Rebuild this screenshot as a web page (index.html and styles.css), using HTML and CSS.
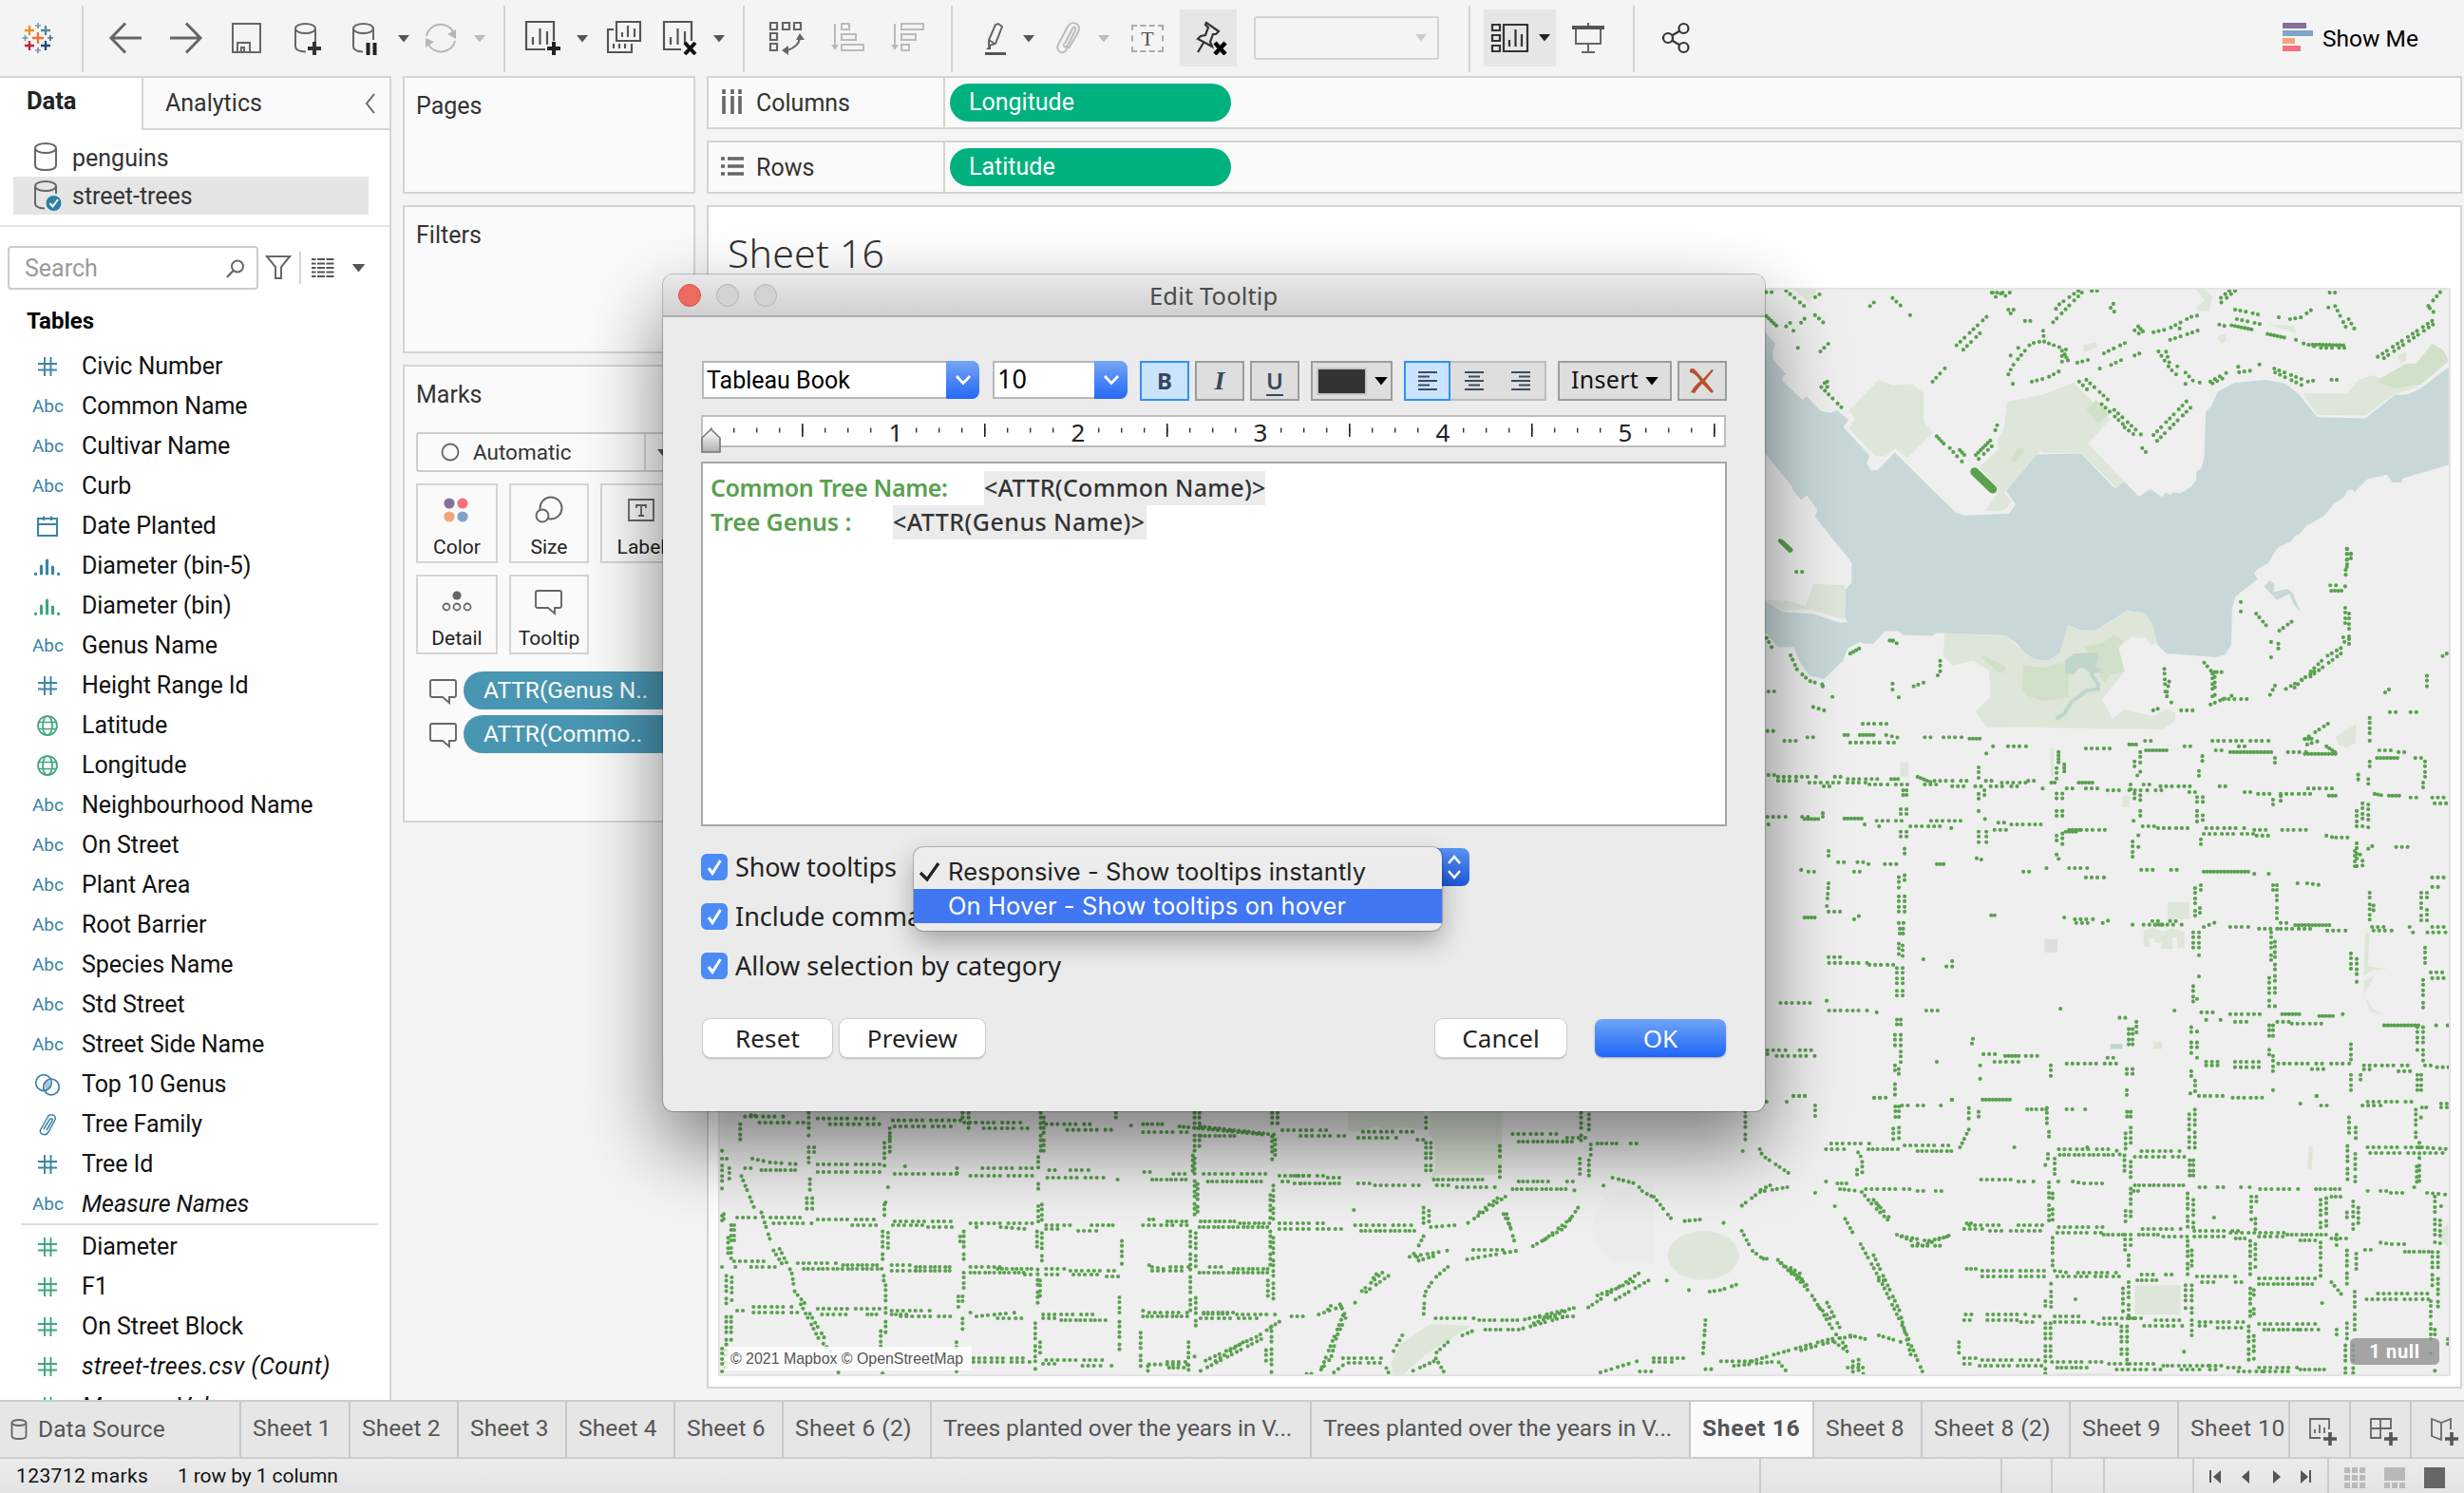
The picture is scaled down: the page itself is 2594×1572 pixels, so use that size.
FILE: index.html
```html
<!DOCTYPE html>
<html lang="en">
<head>
<meta charset="utf-8">
<title>Sheet 16 - Edit Tooltip</title>
<link rel="stylesheet" href="styles.css">
</head>
<body>
<svg class="defs" width="0" height="0">
  <symbol id="num" viewBox="0 0 32 24"><path d="M6 9H26M6 15.500H26M13 2V22M19.500 2V22" fill="none" stroke="currentColor" stroke-width="1.900"/></symbol>
  <symbol id="date" viewBox="0 0 32 24"><path d="M6 4H26V22H6ZM6 10H26M12 1.500V6M20 1.500V6" fill="none" stroke="currentColor" stroke-width="2"/></symbol>
  <symbol id="bin" viewBox="0 0 32 24"><path d="M3.500 20V20.500M9.500 12V20M15.500 6V20M21.500 13V20M27.500 20V20.500" fill="none" stroke="currentColor" stroke-width="3.200" stroke-linecap="round"/></symbol>
  <symbol id="geo" viewBox="0 0 32 24"><g fill="none" stroke="currentColor" stroke-width="1.700"><circle cx="16" cy="12" r="10"/><ellipse cx="16" cy="12" rx="5" ry="10"/><path d="M6.500 8.500H25.500M6.500 15.500H25.500"/></g></symbol>
  <symbol id="set" viewBox="0 0 32 24"><path d="M16.500 5.200A8.300 8.300 0 0 1 15.500 19.300A8.300 8.300 0 0 1 12 12A8.300 8.300 0 0 1 19 6.300Z" fill="#a9c6d2" transform="translate(3.200 2.400) scale(.8)"/><g fill="none" stroke="currentColor" stroke-width="1.700"><circle cx="12" cy="10" r="8.300"/><circle cx="20" cy="14.500" r="8.300"/></g></symbol>
  <symbol id="clip" viewBox="0 0 32 24"><path d="M9 17L16 4.500C18-.5 26 2 24 7L17 20C14 25 6 22 9 17M12 17L18 7C20 4.500 22 6 21 8L15 18" fill="none" stroke="currentColor" stroke-width="1.500"/></symbol>
  <symbol id="bubble" viewBox="0 0 30 28"><path d="M3 2H26Q28 2 28 4V18Q28 20 26 20H21V26L14 20H3Q1 20 1 18V4Q1 2 3 2Z" fill="none" stroke="#666" stroke-width="1.900"/></symbol>
  <symbol id="caret" viewBox="0 0 12 8"><path d="M0 0H12L6 7.500Z" fill="currentColor"/></symbol>
</svg>

<header class="toolbar">
  <svg class="ico logo" width="34" height="36" viewBox="0 0 34 36"><g fill="none" stroke-width="2.300"><path d="M17 12V24M11 18H23" stroke="#eb762d"/><path d="M8 5V15M3 10H13" stroke="#eb9129"/><path d="M25 5V15M20 10H30" stroke="#59879b"/><path d="M8 21V31M3 26H13" stroke="#c72037"/><path d="M25 21V31M20 26H30" stroke="#1f457e"/><path d="M17 2V8M14 5H20" stroke="#7199a6" stroke-width="1.700"/><path d="M17 28V34M14 31H20" stroke="#8690b5" stroke-width="1.700"/><path d="M3.500 15V21M.500 18H6.500" stroke="#7199a6" stroke-width="1.700"/><path d="M30 15V21M27 18H33" stroke="#5b6591" stroke-width="1.700"/></g></svg>
  <i class="sep s1"></i>
  <svg class="ico back" width="36" height="36" viewBox="0 0 36 36"><path d="M18 2.500L3 18L18 33.500M3 18H35" fill="none" stroke="#666" stroke-width="3"/></svg>
  <svg class="ico fwd" width="36" height="36" viewBox="0 0 36 36"><path d="M17 2.500L32 18L17 33.500M32 18H0" fill="none" stroke="#666" stroke-width="3"/></svg>
  <svg class="ico save" width="34" height="36" viewBox="0 0 34 36"><path d="M2 3H31V33H2ZM7 33V23H20V33M11 33V28H14V33" fill="none" stroke="#666" stroke-width="2"/></svg>
  <svg class="ico dbadd" width="30" height="36" viewBox="0 0 30 36"><path d="M1 8V27Q1 32 12 32.500M22 8V22" fill="none" stroke="#666" stroke-width="2"/><ellipse cx="11.500" cy="8" rx="10.500" ry="5" fill="none" stroke="#666" stroke-width="2"/><path d="M21 22V36M14 29H28" stroke="#333" stroke-width="4"/></svg>
  <svg class="ico dbpause" width="28" height="36" viewBox="0 0 28 36"><path d="M1 8V27Q1 32 11 32.500M22 8V20" fill="none" stroke="#666" stroke-width="2"/><ellipse cx="11.500" cy="8" rx="10.500" ry="5" fill="none" stroke="#666" stroke-width="2"/><path d="M16.500 23V36M23.500 23V36" stroke="#222" stroke-width="4"/></svg>
  <svg class="car c1"><use href="#caret"/></svg>
  <svg class="ico refresh" width="36" height="36" viewBox="0 0 36 36"><path d="M3 16A15 14 0 0 1 31 11M33 21A15 14 0 0 1 5 25" fill="none" stroke="#b7b7b7" stroke-width="2"/><path d="M25 14L34 9V19ZM11 22L2 18V28Z" fill="#b7b7b7"/></svg>
  <svg class="car c2 off"><use href="#caret"/></svg>
  <i class="sep s2"></i>
  <svg class="ico wsadd" width="40" height="36" viewBox="0 0 40 36"><path d="M22 30H2V1H31V21M9 17V25M16.500 8V25M24 11V25" fill="none" stroke="#555" stroke-width="2.200"/><path d="M31 22V36M24 29H38" stroke="#222" stroke-width="4"/></svg>
  <svg class="car c3"><use href="#caret"/></svg>
  <svg class="ico dup" width="38" height="36" viewBox="0 0 38 36"><path d="M11 1H36V21H11ZM8 9H2V33H27V24M17 12V17M23 5V17M30 8V17M8 24V29M14 24V29M20 24V29" fill="none" stroke="#555" stroke-width="2.100"/></svg>
  <svg class="ico clear" width="40" height="36" viewBox="0 0 40 36"><path d="M20 30H2V1H31V21M9 17V25M16.500 8V25M24 11V25" fill="none" stroke="#555" stroke-width="2.200"/><path d="M24 23L35 35M35 23L24 35" stroke="#111" stroke-width="4"/></svg>
  <svg class="car c4"><use href="#caret"/></svg>
  <i class="sep s3"></i>
  <svg class="ico swap" width="38" height="36" viewBox="0 0 38 36"><path d="M2 2H9V9H2ZM15 2H22V9H15ZM27 2H34V9H27ZM2 13H9V20H2ZM2 24H9V31H2Z M33 18Q32 27 20 31" fill="none" stroke="#666" stroke-width="2.200"/><path d="M29 20L33 13L38 20ZM21 26L14 31L21 36Z" fill="#666"/></svg>
  <svg class="ico sorta" width="38" height="36" viewBox="0 0 38 36"><path d="M5 3V28M12 3H20V9H12ZM12 14H27V20H12ZM12 25H35V31H12Z" fill="none" stroke="#bbb" stroke-width="2"/><path d="M1 25H9L5 31Z" fill="#bbb"/></svg>
  <svg class="ico sortd" width="38" height="36" viewBox="0 0 38 36"><path d="M5 3V28M12 3H35V9H12ZM12 14H27V20H12ZM12 25H20V31H12Z" fill="none" stroke="#bbb" stroke-width="2"/><path d="M1 25H9L5 31Z" fill="#bbb"/></svg>
  <i class="sep s4"></i>
  <svg class="ico pen" width="26" height="36" viewBox="0 0 26 36"><path d="M15 3L19 6L12 24L5 26L5 20L12 4ZM5 20L11 24" fill="none" stroke="#666" stroke-width="2"/><path d="M2 30L7 25V30ZM1 33H23V36H1Z" fill="#555"/></svg>
  <svg class="car c5"><use href="#caret"/></svg>
  <svg class="ico att" width="28" height="36" viewBox="0 0 28 36"><path d="M10 24L18 8C20 5 22 7 21 10L13 26C11 29 8 27 9 24M14 29L24 12C28 2 17-1 13 6L3 25C0 32 8 36 11 31L14 27" fill="none" stroke="#bbb" stroke-width="2"/></svg>
  <svg class="car c6 off"><use href="#caret"/></svg>
  <span class="tbox">T</span>
  <span class="on pinbtn"><svg width="40" height="36" viewBox="0 0 40 36"><path d="M15 2L28 11L25 14L22 14L19 22L21 27L6 19L9 16L14 15L17 7L14 4ZM12 23L6 33" fill="none" stroke="#333" stroke-width="2.200"/><path d="M24 23L35 35M35 23L24 35" stroke="#000" stroke-width="4.500"/></svg></span>
  <span class="fit"><svg class="car"><use href="#caret"/></svg></span>
  <i class="sep s5"></i>
  <span class="on cards"><svg width="42" height="36" viewBox="0 0 42 36"><path d="M2 4H10V10H2ZM2 15H10V21H2ZM2 26H10V32H2ZM14 4H39V32H14ZM20 20V27M26.500 9V27M33 14V27" fill="none" stroke="#333" stroke-width="2.200"/></svg><svg class="car"><use href="#caret"/></svg></span>
  <svg class="ico pres" width="36" height="36" viewBox="0 0 36 36"><path d="M5 9V24H31V9M18 2V5M18 24V33M11 33H25" fill="none" stroke="#666" stroke-width="2"/><path d="M1 5H35V9H1Z" fill="#555"/></svg>
  <i class="sep s6"></i>
  <svg class="ico share" width="34" height="36" viewBox="0 0 34 36"><g fill="none" stroke="#333" stroke-width="2.200"><circle cx="7" cy="18" r="5"/><circle cx="23.500" cy="8" r="5"/><circle cx="23.500" cy="28" r="5"/><path d="M11 15.500L19.500 10.500M11 20.500L19.500 25.500"/></g></svg>
  <span class="showme"><svg width="34" height="32" viewBox="0 0 34 32"><path d="M0 0H25V6H0Z" fill="#85709a"/><path d="M0 8H32V14H0Z" fill="#7fa3cb"/><path d="M0 16H13V22H0Z" fill="#f2a57b"/><path d="M0 24H19V30H0Z" fill="#f7707e"/></svg>Show Me</span>
</header>

<main class="work">
  <aside class="side">
    <div class="tabs2"><b>Data</b><span>Analytics<svg width="12" height="22" viewBox="0 0 12 22"><path d="M10 1L2 11L10 21" fill="none" stroke="#666" stroke-width="2"/></svg></span></div>
    <div class="sources">
      <div class="src"><svg width="30" height="34" viewBox="0 0 30 34"><path d="M2 8V25Q2 30 13 30T24 25V8" fill="none" stroke="#666" stroke-width="2"/><ellipse cx="13" cy="7" rx="11" ry="5" fill="none" stroke="#666" stroke-width="2"/></svg>penguins</div>
      <div class="src sel"><svg width="30" height="34" viewBox="0 0 30 34"><path d="M2 8V25Q2 30 12 30.500M24 8V15" fill="none" stroke="#666" stroke-width="2"/><ellipse cx="13" cy="7" rx="11" ry="5" fill="none" stroke="#666" stroke-width="2"/><circle cx="21.500" cy="25" r="8" fill="#2e7fa3"/><path d="M17.500 25L20.500 28.500L26 21" fill="none" stroke="#fff" stroke-width="2"/></svg>street-trees</div>
    </div>
    <div class="find">
      <div class="search">Search<svg width="20" height="20" viewBox="0 0 20 20"><circle cx="12" cy="7.500" r="6" fill="none" stroke="#666" stroke-width="2"/><path d="M7.500 12L1 19" stroke="#666" stroke-width="2.200"/></svg></div>
      <svg class="funnel" width="28" height="28" viewBox="0 0 28 28"><path d="M2 2H26L17 13V25H11V13Z" fill="none" stroke="#666" stroke-width="2"/></svg>
      <i></i>
      <svg width="26" height="22" viewBox="0 0 26 22"><path d="M0 2H24M0 6.500H24M0 11H24M0 15.500H24M0 20H24" stroke="#555" stroke-width="2" stroke-dasharray="4.500 1.500 8 1.500 8 1"/></svg>
      <svg class="fcar"><use href="#caret"/></svg>
    </div>
    <h3>Tables</h3>
    <ul class="fields">
      <li><svg><use href="#num"/></svg>Civic Number</li>
      <li><em>Abc</em>Common Name</li>
      <li><em>Abc</em>Cultivar Name</li>
      <li><em>Abc</em>Curb</li>
      <li><svg><use href="#date"/></svg>Date Planted</li>
      <li><svg><use href="#bin"/></svg>Diameter (bin-5)</li>
      <li class="g"><svg><use href="#bin"/></svg>Diameter (bin)</li>
      <li><em>Abc</em>Genus Name</li>
      <li><svg><use href="#num"/></svg>Height Range Id</li>
      <li class="g"><svg><use href="#geo"/></svg>Latitude</li>
      <li class="g"><svg><use href="#geo"/></svg>Longitude</li>
      <li><em>Abc</em>Neighbourhood Name</li>
      <li><em>Abc</em>On Street</li>
      <li><em>Abc</em>Plant Area</li>
      <li><em>Abc</em>Root Barrier</li>
      <li><em>Abc</em>Species Name</li>
      <li><em>Abc</em>Std Street</li>
      <li><em>Abc</em>Street Side Name</li>
      <li><svg><use href="#set"/></svg>Top 10 Genus</li>
      <li><svg><use href="#clip"/></svg>Tree Family</li>
      <li><svg><use href="#num"/></svg>Tree Id</li>
      <li class="it"><em>Abc</em>Measure Names</li>
    </ul>
    <ul class="fields measures">
      <li class="g"><svg><use href="#num"/></svg>Diameter</li>
      <li class="g"><svg><use href="#num"/></svg>F1</li>
      <li class="g"><svg><use href="#num"/></svg>On Street Block</li>
      <li class="g it wide"><svg><use href="#num"/></svg>street-trees.csv (Count)</li>
      <li class="g it"><svg><use href="#num"/></svg>Measure Values</li>
    </ul>
  </aside>

  <section class="shelves">
    <div class="card pages">Pages</div>
    <div class="card filters">Filters</div>
    <div class="card marks">Marks
      <div class="auto"><svg width="20" height="20" viewBox="0 0 20 20"><circle cx="10" cy="10" r="8.500" fill="none" stroke="#666" stroke-width="1.800"/></svg><span>Automatic</span><i><svg class="car"><use href="#caret"/></svg></i></div>
      <div class="mbtns">
        <div><svg width="32" height="32" viewBox="0 0 32 32"><circle cx="8" cy="8" r="5.600" fill="#85709a"/><circle cx="22" cy="8" r="5.600" fill="#f7707e"/><circle cx="8" cy="22" r="5.600" fill="#f2a57b"/><circle cx="22" cy="22" r="5.600" fill="#7fa3cb"/></svg>Color</div>
        <div><svg width="32" height="32" viewBox="0 0 32 32"><circle cx="18" cy="13" r="11.500" fill="none" stroke="#666" stroke-width="2"/><circle cx="9" cy="21" r="6.500" fill="#fafafa" stroke="#666" stroke-width="2"/></svg>Size</div>
        <div><svg width="32" height="32" viewBox="0 0 32 32"><path d="M3 4H29V26H3Z M11 13V10H21V13M16 10V21M13 21H19" fill="none" stroke="#666" stroke-width="1.800"/></svg>Label</div>
        <div><svg width="32" height="32" viewBox="0 0 32 32"><circle cx="16" cy="9" r="4.600" fill="#666"/><g fill="none" stroke="#666" stroke-width="1.800"><circle cx="5" cy="21" r="3.500"/><circle cx="16" cy="21" r="3.500"/><circle cx="27" cy="21" r="3.500"/></g></svg>Detail</div>
        <div><svg class="bub"><use href="#bubble"/></svg>Tooltip</div>
      </div>
      <div class="attr"><svg class="bub"><use href="#bubble"/></svg><span>ATTR(Genus N..</span></div>
      <div class="attr"><svg class="bub"><use href="#bubble"/></svg><span>ATTR(Commo..</span></div>
    </div>
  </section>

  <section class="view">
    <div class="shelf"><label><svg width="24" height="26" viewBox="0 0 24 26"><path d="M3 7V26M12 7V26M20 7V26M3 0V5M12 0V5M20 0V5" stroke="#666" stroke-width="3.600"/></svg>Columns</label><span>Longitude</span></div>
    <div class="shelf"><label><svg width="24" height="22" viewBox="0 0 24 22"><path d="M0 3H4M7 3H24M0 11H4M7 11H24M0 19H4M7 19H24" stroke="#666" stroke-width="3.600"/></svg>Rows</label><span>Latitude</span></div>
    <div class="sheet">
      <h1>Sheet 16</h1>
      <div class="mapbox">
      <svg class="map" viewBox="757 305 1820 1142" preserveAspectRatio="none">
        <g transform="translate(1850 0) scale(.47449 .38270)">
          <path class="water" d="M0 890L18 918 38 945 32 965 33 990 62 1030 53 1036 55 1050 98 1100 108 1091 138 1130 160 1136 175 1129 200 1155 189 1175 247 1253 241 1275 250 1294 265 1293 303 1245 438 1410 460 1418 556 1413 571 1388 550 1350 618 1250 716 1248 790 1343 812 1325 845 1366 870 1345 895 1367 905 1355 913 1362 922 1354 935 1358 960 1340 972 1320 972 1298 983 1288 989 1262 993 1133 1005 1118 1020 1077 1057 1053 1125 1045 1170 1055 1200 1085 1240 1148 1347 1151 1412 1087 1440 1085 1468 1070 1536 1006V1278L1430 1316 1428 1327 1408 1328 1395 1306 1352 1318 1323 1354 1318 1346 1307 1350 1300 1368 1278 1385 1255 1420 1218 1445 1200 1470 1185 1478 1182 1490 1155 1505 1142 1520 1130 1550 1105 1568H210L208 1548 126 1422 131 1403 108 1363 95 1375 75 1345V1338L0 1225Z"/>
          <path class="park" d="M201 1130L267 1045 297 1061 340 1056 367 1081V1160L388 1190 331 1260 305 1233 280 1257 262 1255 202 1180 214 1152ZM552 1105L632 1086 700 1054 781 1153 732 1220 812 1325 795 1343 716 1246H632L625 1240 545 1355 562 1380 550 1400 530 1408 504 1403 533 1355 530 1340 490 1285 535 1235 530 1215 545 1178ZM1209 1083H1305L1332 1045 1365 1032 1420 1069 1468 1062 1410 1085 1347 1143 1240 1141ZM80 797H130L113 832ZM970 797H993L1008 815 1000 857 985 858 970 850 990 825ZM721 950L750 941 753 955 724 969ZM1019 927L1036 919 1038 940 1026 945ZM1130 892L1190 897 1193 916ZM1418 978L1437 967 1438 990 1427 1000Z"/>
          <path class="park2" d="M727 1130L750 1100 779 1140 755 1165ZM560 1265L582 1228 591 1241 571 1270ZM1375 1045L1435 1002 1460 1000 1495 945 1520 963 1532 993 1470 1058 1418 1069 1375 1053Z"/>
          <path class="dots b" d="M18 804h12M62 800L102 842M136 810L126 818M62 898L80 878M78 910L72 920M95 888L110 867M126 867L145 888M88 957h1M138 967L160 940M248 842L263 825M298 820L322 848M337 867h1M387 1050L418 1008M440 950L515 862M455 962L495 913M518 805H562M520 805L532 825M538 808L552 816M555 852H578M560 862h1M592 883h12M632 910L636 957M645 945L683 962M674 965V1003M555 1030L565 1005 605 945 625 940M560 978h1M577 957h1M565 1056h9M607 1050L640 1040 667 1022M710 800L665 840 655 862M718 805L653 888M740 800h20M782 847L793 862M788 836h1M835 909L845 918M708 998L740 988M758 1014h10M783 1004L810 988M767 972L820 940M835 978L856 967M877 914L910 905 960 872 980 867M914 935L965 914 987 904M935 904h10M888 967L914 1015 932 1035M905 968L915 1010M930 1008h1M948 1025L965 1048 987 1055M948 1056h1M1003 1050L1040 1025M1008 1055L1040 1035M1065 1009h10M1067 1024L1105 1018M1112 1003h10M1145 1014L1220 1050 1240 1045M1147 1025L1207 1060M1272 1045h12M1058 800L1020 840M1045 800L1018 828M1058 852L1080 857 1115 867M1062 878L1118 893M1023 893L1038 898M1193 935v8M1210 945L1245 957H1302M1155 873h9M1180 878L1205 873 1228 852M1265 846h1M1280 842L1307 908M1310 878L1323 905M1268 805H1288M1513 804L1480 852M1490 848L1505 867M1495 883L1373 983M1497 893L1378 994M425 1233L452 1270M530 1170L522 1197M518 1228L487 1265M712 1050L730 1072M728 1045L778 1102M762 1112L810 1168M790 1128L855 1202M813 1176L835 1197M852 1233L860 1244M877 1197L952 1102M885 1213L962 1118M140 1065L153 1045M148 1075L187 1124M153 1050V1068M1306 1510V1568M1315 1525v14"/>
          <path class="dots d" d="M18 870L42 898M680 975L690 998M843 898L856 915M1050 895L1100 908M1130 919L1172 930M1230 948L1300 950M396 1200L415 1225M447 1238L460 1255M515 1212L480 1255M48 1488L72 1518"/>
          <path class="solid" d="M480 1298L520 1346"/>
        </g>
        <g transform="translate(1800 560) scale(.50638 .38270)">
          <path class="water" d="M243 0L293 83V140L280 158 279 235 284 248 270 250 213 226 150 220 100 180V270L116 280 140 317H173L186 360 205 395 235 405 275 355 285 320 310 303 320 308H338L363 273H390L400 284 460 286 470 278 612 285 635 305 650 330 672 350 700 354 725 335 735 300 743 255 765 270 800 272 865 217 900 222 917 250 928 310 948 335 1050 345 1070 338 1082 310 1084 210 1091 178 1137 130 1130 115 1142 92 1158 88 1180 40 1210 20 1212 12 1226 0ZM1150 150L1163 133 1172 145 1170 165 1200 157 1210 170 1226 220 1212 200 1203 170 1177 188Z"/>
          <path class="park" d="M100 185L160 190 197 203 214 143 279 147V242L213 215H150ZM486 279L612 285 650 330 672 350 700 354 725 335 743 255 765 270 800 272 865 217 900 222 917 250 928 305 915 310 905 293 876 289 848 318 860 385 814 460 835 514 860 490 920 507 950 487 966 500 965 522 940 543 573 537 550 494 582 454 578 382 545 355 503 367 484 345ZM1299 565L1342 528 1341 580 1323 594 1304 585ZM394 635h17v38h-17ZM706 595h7v80h-7ZM858 725h12v32h-15ZM950 1019h45v47h-45ZM900 1098L920 1088 940 1100 960 1090 985 1100V1144H970V1116H960V1147H937V1130H923V1118H912V1142H900ZM1360 1103h10l-4 92 42 8-30 3-20 14ZM1358 1235l24-16-24 50ZM1358 1278l20 35 18 16-25-8ZM921 1402h17v20h-17Z"/>
          <path class="park2" d="M650 368L692 374 730 360 745 385 743 455 692 465 655 450 648 430ZM778 316L815 305 838 284 858 300 848 320 860 385 830 393 818 415 805 380ZM562 345L570 342 612 370 610 387 600 388Z"/>
          <path class="water w2" d="M736 355L755 335 800 332 806 345 800 370 812 378 808 388 790 388 775 375 765 375 755 392 738 390ZM831 1409h25v14h-25Z"/>
          <path class="stream" d="M790 388L806 420 805 432 780 438 750 468 735 500 718 514"/>
          <path fill="#dedede" d="M694 1120h27v37h-27Z"/>
          <path class="dots a" d="M118 548H140M153 575H180M201 565H222M316 528H376M290 580H385M365 559L392 567M445 565H465M484 565H530M618 590H662M587 590h1M780 596H832M903 575H918M985 590H1005M1043 575H1165M1050 601H1065M1098 590h22M1200 606H1240M1390 601H1420M1430 606h20M1465 622h12M1412 496h20M1455 496h12M120 669h12M140 674H225M140 685H185M205 690H330M258 674H280M285 680H355M235 700h15M330 695H370M385 695H420M445 695H480M465 685H510M502 700H530M520 685h20M550 700h12M572 685h20M582 700h30M605 690H660M625 700h20M660 685h12M690 706h1M740 706H760M780 706H815M825 711H860M870 711H915M900 695h12M925 711h20M935 700H1000M995 716h12M1058 700H1080M1110 716h12M1138 721H1165M1185 721H1250M1242 706H1298M1455 731h15M1500 731h30M1505 747h30M118 784H160M190 784H210M345 795H380M120 805h10M320 805h1M350 810h1M385 795h20M415 810H490M458 795H520M500 815h1M598 800h15M590 820H615M625 805H700M770 820H820M898 810H930M930 815H1000M1030 815H1110M1025 831H1130M1130 820H1165M1135 836h25M1188 820H1240M1280 836L1295 841M1300 841H1330M1425 867H1462M265 909h14M305 909h12M328 914h1M362 914h28M188 930h10M203 935H222M298 935h20M650 935h14M698 925h1M745 925H788M780 951H822M895 930H925M957 930H978M1130 941h1M1160 941h1M1220 967h1M1240 967L1268 972M1500 951h35M1500 977h12M245 1045H275M298 1066L316 1050M735 1061h1M757 1066H800M760 1076h25M815 1076L833 1066M877 1081h1M900 1081H990M918 1071h18M955 1071h14M1025 1087L1052 1073M1080 1087H1125M1140 1092H1180M1185 1076H1205M1185 1092H1255M1282 1097H1325M1375 1087h30M1378 1097H1425M1453 1087h8M1460 1102h1M1490 1102H1532M1500 1087h30M245 1170H272M246 1186H330M330 1191H382M442 1176h1M490 1196h16M502 1181h1M1497 1212h30M1500 1228h33M145 1296H210M246 1317H332M345 1322h10M448 1317h24M727 1312h1M964 1317h1M1020 1322h25M1030 1343h1M1060 1343h1M1080 1327H1155M1090 1348H1122M1178 1348h25M1208 1353H1275M1314 1327h1M1508 1358h1M1532 1358h1M118 1426H165M118 1437h10M137 1442H218M185 1426h25M470 1458h1M567 1437h35M590 1458H642M655 1442H692M740 1463H852M825 1447h12M850 1337h12M1030 1458H1065M1030 1468H1065M1090 1458H1150M1090 1473H1150M1180 1463H1275M1250 1478H1275M1290 1463h40M1358 1468H1455M1358 1479h20M1430 1484h35M1485 1468h12M1510 1473h25M172 1552h25M340 1557h25M502 1562h1M1015 1552H1065M1085 1557H1150M1260 1552h1M178 110h16M1288 147H1300M1065 460h55M978 491H1015M378 434h10M253 454v1M391 455h1M213 482L238 492M120 439h14"/>
          <path class="dots d" d="M278 559h12M310 559H345M538 569H565M870 585H890M905 601H950M1080 606H1168M1235 611H1300M1385 622H1428M375 680H395M430 674L460 690M765 690H800M708 690h10M1285 726H1305M1380 721L1400 726M1410 726H1436M195 790H230M233 774V784M278 789H318M738 825H765M745 820H770M470 914H488M1025 935H1118M195 1061H222M583 1055H595M1215 1082H1292M925 1081H940M1188 1327H1230M1265 1332H1298M1400 1358H1478M612 1442H642M565 1562H625M290 335L310 320M372 299H385M1290 162H1318M723 606V635M735 640V660M1235 570L1250 569M1280 590L1300 608"/>
          <path class="dots v" d="M400 711V735M407 711V735M395 763V780M407 763V780M395 825V852M407 825V852M403 872v20M403 945V965M391 950V985M391 1003V1045M403 1003V1045M391 1076h13M393 1092V1115M400 1092V1115M391 1133V1170M399 1138V1170M387 1200V1288M399 1200V1288M387 1342V1368M395 1342V1368M383 1384V1415M395 1384V1415M395 1430V1468M383 1468V1490M391 1478V1500M383 1520V1555M557 648V680M573 610v10M557 721V738M569 711V735M557 768v1M570 790v7M557 825V855M573 825V862M553 898L569 904M719 650V690M719 720V740M731 720V745M719 768V790M731 768V790M731 830V862M719 836v16M719 888L727 910M893 606V635M881 632V660M893 660L881 680M873 695V710M881 720V748M893 725V740M893 768v20M879 795v1M889 835v7M877 852V900M889 867v1M1022 617v20M1015 658V680M1011 730V750M1023 730V755M1011 768V805M1023 780V800M1019 846V872M1019 972V990M1007 980V1065M1017 1035V1062M1003 1102V1145M1015 1102V1165M1015 1223v6M1003 1250V1310M1011 1285v12M999 1363V1385M999 1405V1440M1011 1375V1388M1011 1405V1425M1011 1447v1M999 1484V1500M1007 1510V1545M997 1545v1M1173 622V638M1169 737V758M1185 727V747M1169 972V1000M1177 972V1065M1165 1102V1180M1173 1128V1215M1161 1227V1290M1173 1222V1240M1173 1255V1275M1161 1305V1318M1173 1305V1318M1161 1358V1395M1169 1358V1390M1161 1425V1440M1169 1442V1500M1169 1536v1M1370 512V585M1370 632V660M1346 668V695M1367 680V700M1355 747V820M1343 768V820M1367 750V825M1343 857V925M1339 878V925M1355 905V930M1367 872L1378 862M1350 888v1M1370 993V1010M1378 1028V1045M1370 1025V1080M1485 632V680M1481 690V710M1477 993V1072M1489 993V1015M1489 1040V1072M1485 1144V1200M1481 1233V1310M1331 1160V1210M1343 1175V1240M1331 1410V1460M1469 1363V1432M1481 1363V1465M1331 1494V1550M1351 1494V1520M1469 1494V1545M1477 1494V1540M245 878v18M245 967L241 1035M241 1290v1M233 425v12M545 1395L541 1420M560 1468v1M560 1505v1M707 1468V1505M885 1348V1388M869 1368V1430M877 1368V1430M865 1478V1505M877 1478V1505M865 1536V1560M1323 47V90M1331 60V75M1320 105V125M1319 150L1315 160M1319 209V265M1327 225V290M1102 193v1M1102 219v1M1134 225L1157 261M1182 272L1210 245M1165 303v1M1165 345v1M1180 308V330M1315 290L1320 315M1327 295V320M1310 320L1270 350M1310 335L1240 405M1270 355L1205 440M1255 385L1195 433M1173 423L1162 450M1026 360L1045 390M1043 390V465M1048 386V450M1052 386h12M1039 475L1085 450M943 377L945 440M953 412L947 450 958 470M920 491L940 482M1530 335L1518 345M1489 396V425M1410 434L1400 444M1283 528L1235 570M1240 585L1265 575M116 292L127 318M166 340L180 380 205 410 232 420M378 300L395 313M477 355V385L465 408M422 425L448 412M378 418v1M166 340L175 365"/>
          <path class="solid s" d="M147 27L166 50"/>
        </g>
        <g transform="translate(740 1140) scale(.63776 .33333)">
          <path class="park" d="M1063 80H1188V150L1150 140 1130 150 1110 138 1075 155 1063 150ZM1200 80H1317V290H1215L1197 305 1208 270 1205 185 1197 165ZM1137 920L1135 885 1150 825 1200 763 1268 768 1190 860 1155 920Z"/>
          <path d="M1500 340Q1455 420 1470 500L1500 570H1568V320Z" fill="#ececec"/>
          <path class="dots a" d="M68 107H140M92 126H170M188 113H285M208 131H300M312 119H425M315 138H410M430 126H525M462 144H540M565 131H640M600 149H675M725 156H800M985 168H1060M955 150H1030M1088 155H1180M1080 174H1150M1178 180h10M1335 162H1415M1425 174H1460M1530 192h12M80 240L110 252 160 258M68 270h14M188 258H292M188 282H290M332 264h1M315 288H420M460 270H545M440 294H545M570 276h12M605 276h32M567 300H665M683 306h1M727 282h10M775 288h25M825 288H930M950 294H1030M955 312h10M975 318h10M1030 300h20M1080 318h20M1108 324H1185M1210 324h20M1243 330H1308M1425 312h10M55 426H90M110 426H165M115 444H180M188 432H285M245 450H290M315 438H412M312 450h50M370 456H412M440 444H545M450 456h6M490 456L530 462M565 450H610M565 462H590M618 468H650M640 450H665M725 450H800M950 444H1030M950 462H1055M1075 450H1170M1200 456L1240 450M50 564H105M30 582h1M52 582h5M78 582H125M155 570H225M310 576H345M310 594H350M440 582H500M530 606h15M565 588h35M565 606h25M605 594H685M610 606h40M665 612h20M735 576h1M740 582L765 590M740 594H795M770 582h30M835 582h20M82 708H150M55 720h15M82 726H160M188 714H290M195 732H240M310 720H375M325 738H412M440 726v15M450 738L515 726M485 744h45M560 732H650M560 744h20M725 720h1M735 726H800M820 744H920M880 732H945M970 738h20M1015 732L1055 705M445 870H530M445 882H540M565 876H665M560 888h20M625 894h30M673 894h1M735 890H800M765 882h35M1165 550L1235 528M1260 558L1345 530M1270 528h50M1208 744H1280M1153 798L1135 860M1040 915L1060 885H1120M1055 870H1120M1545 912h20M1480 915L1540 880"/>
          <path class="dots c" d="M725 131H760M785 138L930 165M820 138L945 165M820 168H880M1345 186H1440M1475 192H1510M95 276H158M740 306H800M832 312H925M985 318H1055M975 294H1000M1205 306H1285M1345 312H1400M1335 336H1425M765 438H800M735 432h12M820 438H880M818 456H935M885 444H935M1085 468H1180M668 450H682M165 588H295M230 576H290M350 582h60M350 594H412M440 600H530M485 588H545M875 588H935M818 600H935M270 732H290M590 750H665M725 738H800M825 726H880M825 730H870M310 732H340M768 900h30M78 102L88 106"/>
          <path class="dots v" d="M60 131V180M30 215v1M30 240h8M30 262V340M42 270V315M173 95V180M173 204V260M182 204V225M175 305V340M170 365V410M179 365V410M307 144V180M298 190V265M307 170V240M304 330V345M300 378h5M298 385V420M295 470V560M304 474V530M297 610V635M300 640V740M300 755V800M292 785V840M427 95v18M437 95V156M418 270V290M429 470V570M423 486V510M429 600V660M427 675V700M420 675V720M427 745V790M417 820V840M556 95V230M561 110V225M552 235V270M552 320V350M552 390V440M558 385V440M550 470V520M558 475V570M551 590V710M555 625V690M547 760V915M555 820V860M680 95V120M705 135V150M690 500V580M686 678V740M686 755V855M721 790V900M733 895V915M810 95V430M818 95V215M815 320V420M807 230V290M803 470V720M812 475V590M812 680V770M800 820V915M810 865v1M938 95V140M947 95V140M938 170V250M943 180V250M940 325V440M935 355V430M935 470V580M940 490V690M931 625V690M928 845V880M937 770V915M1192 110V145M1192 190V290M1200 190V285M1188 395V450M1197 405V450M1188 485L1180 515M1314 200V235M1314 265V300M1448 95V200M1461 100V160M1464 195V240M1461 245V300M1446 240V300M1437 340v1M62 295L85 405M95 410L110 500M115 530L135 590M125 525L145 600 150 660 168 700M160 700L190 810 210 850M175 730L200 810M45 450V560M50 450V520M40 490V550M37 610V700M46 615V700M37 740V915M45 740V815M30 840v75M33 415V440M30 420V440M1323 360L1260 445M1310 365L1280 410M1325 415L1340 515M1320 415L1335 470M1443 395L1420 460 1365 520M1430 430L1385 500M1180 562L1210 545M1172 540L1182 560M1120 600L1082 665M1130 610L1090 665M1110 605L1100 630M1075 695v1M1050 700L1060 740 1045 800 1035 870 1015 915M1035 705L1025 730M1055 735L1020 900M1228 582L1205 620 1190 665 1188 740M1280 750H1350L1440 710M1290 780H1345L1420 740M1370 760L1425 720M1380 740L1440 738M1460 710L1545 600M1475 672L1545 620M1505 685L1568 615M1228 820L1205 860 1222 915M1268 785L1250 800M950 755L915 800 820 885M920 810L815 915M890 820L840 885M1130 915L1125 895M1205 880L1165 915M1500 300h1M1485 325v5M1510 305L1540 320 1550 345 1568 362M1073 402v1M995 920h10M222 915v1M417 912v1M295 918v1"/>
        </g>
        <g transform="translate(1740 1100) scale(.54461 .33333)">
          <ellipse class="park" cx="96" cy="666" rx="69" ry="77"/>
          <path class="park" d="M930 760h88v92h-88ZM1266 322h8l-2 70h-8ZM1536 565Q1512 590 1520 615L1536 640ZM773 1038h115v8h-115Z"/>
          <path class="dots a" d="M480 192H500M510 192H530M555 192h1M257 180h1M218 180h1M270 162H295M426 168h22M576 174h1M798 204h14M834 204h1M1290 192h12M1370 192h40M1380 180H1470M1250 186h10M1522 186h14M1522 198h12M343 312H425M333 330h45M485 318H575M592 324h1M697 324h1M783 330H882M943 336H1025M930 354H1028M1380 324H1480M1385 342H1480M1485 324L1535 330M1490 342h45M633 426H700M705 432h12M734 432h1M782 432h1M810 432L830 438H880M1055 450h14M1090 450h20M1135 450h1M1152 450h1M1172 456H1250M1380 462h1M1405 462h16M1425 468h30M410 456H505M510 462h15M545 462H565M333 432h1M600 582H635M650 588H680M690 588H755M610 570H670M705 570H755M783 576H870M780 594H870M945 582H1025M985 606h50M1045 588H1130M1045 606H1115M1115 594H1165M1172 594H1225M1170 606H1225M1405 625L1425 630H1460M1375 648h14M635 714H755M635 732H755M775 714L800 720M820 720H900M780 732H900M943 726h30M990 726h15M1050 732H1130M1060 750H1090M1125 750h14M1170 738H1280M1400 786H1500M1378 804H1500M603 852H620M645 852H725M600 870h20M645 870H710M710 876h30M735 858h14M775 858H830M775 876H850M870 864H930M860 882H905M920 864H950M970 870H1020M948 888H1025M1055 876H1145M1055 888h20M1090 894h50M1170 882H1280M1250 900H1290M600 990H630M635 996H750M600 1008H620M630 1014H750M770 1002H870M880 1008h35M920 1008H970M895 1026H990M1015 1014H1080M1020 1026H1060M1075 1014h30M1075 1026h20M1110 1020H1140M1130 1032H1180M1170 1020H1250M1180 1032H1230M1083 546h1M815 804h1M1292 816h1M1281 162h1M1495 468L1535 474M0 990H65M0 1002H40M130 1000H190M100 1025h14"/>
          <path class="dots c" d="M722 204H760M415 330H480M510 336H580M785 348H890M838 324h1M1485 198H1500M930 444H1025M928 462h10M1280 456H1330M355 438H380M360 456L395 462M1310 480H1335M938 600H975M870 600H910M1125 612H1150M1225 600H1310M1250 618H1285M1310 612H1340M605 564H615M1452 654H1498M605 708H625M935 744H975M1170 756H1280M1180 900H1250M780 1020H840M985 1014H1010M1250 1026H1300"/>
          <path class="dots v" d="M177 212V300M172 336v1M312 192V235M467 195V235M474 195V235M463 265V300M474 262V310M609 200V240M628 212V245M609 268L592 325M760 200V250M764 275V300M762 345V370M757 380v1M775 360V420M764 435V560M771 470V490M771 520V565M771 610V710M768 755v1M768 780V840M757 810V840M757 880V1040M767 880V990M915 212V245M922 212V245M912 280V330M922 262V330M895 335L905 355M910 350V420M922 370V430M922 455V560M912 525V560M911 600V650M922 600V640M918 665V710M918 750V860M907 770V850M904 890V985M915 890V1000M1035 220V330M1046 205V330M1036 365V430M1043 365V430M1032 470V580M1043 490V590M1032 620V735M1040 650V710M1028 760V835M1040 760V850M1040 870V940M1025 970v1M1155 480V560M1165 480V500M1163 550V590M1153 620V735M1163 630V710M1153 770V870M1160 775V800M1160 835V865M1150 890V1010M1160 920V1000M1289 490V590M1300 485V590M1289 625V735M1310 750L1330 790M1344 230V300M1357 262V310M1341 320V440M1356 345V440M1352 495V600M1340 530V560M1362 515V570M1320 600V635M1340 650V770M1358 660V730M1355 780V920M1340 880V940M1320 900V920M1337 950V1040M1352 950V1040M1473 205V300M1483 230v1M1480 310V440M1475 385V440M1470 450v1M1510 480V630M1522 510V525M1520 555V630M1505 655V770M1516 655V710M1516 740V830M1502 810V935M1510 900V930M1502 975v1M1510 1030v10M1535 930v30M590 940V980M205 330L210 350 265 410M258 450L205 465 165 515M225 444L205 460M395 340L405 365M403 370V415M393 395V420M402 465L425 510 460 565M425 490L460 555M470 600L500 620 520 635 575 600M480 605L530 620 570 605M500 635H560M312 468v1M350 510v1M370 550L385 595M400 630L440 750 490 920 520 1035M425 665L475 840 500 1000M435 745h12M170 588L190 650 210 675M245 690L290 760 305 790 350 910 380 970M240 680L300 765M265 705L290 730M320 830L345 870M335 815L360 895M0 480L35 552M60 557L90 552M135 563v1M25 745L33 750M68 775v1M108 780L130 775 165 755M100 870L95 980M190 1000L230 980 340 930 400 920M155 1014L240 1000 260 1038M285 965L350 935M350 940L375 970M380 918L410 930M435 918L480 940M385 1000V1035M375 1020h30M396 995V1035M405 1040v1"/>
          <path class="dots d" d="M212 676H225M265 715L290 745M430 500L436 512"/>
        </g>
      </svg>
      <span class="credit">© 2021 Mapbox © OpenStreetMap</span>
      <span class="null">1 null</span>
      </div>
    </div>
  </section>
</main>

<nav class="sheets">
  <span class="t-src"><svg width="18" height="24" viewBox="0 0 18 24"><path d="M1.500 5V19Q1.500 22 9 22T16.500 19V5" fill="none" stroke="#666" stroke-width="1.800"/><ellipse cx="9" cy="5" rx="7.500" ry="3" fill="none" stroke="#666" stroke-width="1.800"/></svg>Data Source</span>
  <span class="t115">Sheet 1</span><span class="t114">Sheet 2</span><span class="t114">Sheet 3</span><span class="t114">Sheet 4</span><span class="t114">Sheet 6</span><span class="t156">Sheet 6 (2)</span><span class="t400">Trees planted over the years in V...</span><span class="t399">Trees planted over the years in V...</span><b class="t130">Sheet 16</b><span class="t114">Sheet 8</span><span class="t156">Sheet 8 (2)</span><span class="t114">Sheet 9</span><span class="t117">Sheet 10</span>
  <span class="t-new"><svg width="32" height="32" viewBox="0 0 32 32"><path d="M14 22H3V2H23V13M8 13V17M13 8V17M18 11V17" fill="none" stroke="#666" stroke-width="1.800"/><path d="M24 16V30M17 23H31" stroke="#555" stroke-width="3.600"/></svg></span>
  <span class="t-new"><svg width="32" height="32" viewBox="0 0 32 32"><path d="M14 22H3V2H24V13M3 12H24M13 2V22" fill="none" stroke="#666" stroke-width="1.800"/><path d="M24 16V30M17 23H31" stroke="#555" stroke-width="3.600"/></svg></span>
  <span class="t-new last"><svg width="32" height="32" viewBox="0 0 32 32"><path d="M13 6L3 2V20L13 24V6L23 2V13" fill="none" stroke="#666" stroke-width="1.800"/><path d="M24 16V30M17 23H31" stroke="#555" stroke-width="3.600"/></svg></span>
</nav>
<footer class="status">
  <span>123712 marks</span><span>1 row by 1 column</span>
  <i class="g1"></i><i class="g2"></i><i class="g3"></i><i class="g4"></i><i class="g5"></i>
  <div class="pager"><svg width="142" height="36" viewBox="0 0 142 36"><path d="M17 12V25M122 12V25" stroke="#555" stroke-width="2"/><path d="M28 12V26L20 19ZM58 12V26L50 19ZM83 12V26L91 19ZM112 12V26L120 19Z" fill="#555"/></svg></div>
  <svg width="142" height="36" viewBox="0 0 142 36"><path d="M16 9h6v6h-6zM24 9h6v6h-6zM32 9h6v6h-6zM16 17h6v6h-6zM24 17h6v6h-6zM32 17h6v6h-6zM16 25h6v6h-6zM24 25h6v6h-6zM32 25h6v6h-6zM58 9h22v14h-22zM58 25h6v6h-6zM66 25h6v6h-6zM74 25h6v6h-6z" fill="#b9b9b9"/><path d="M100 9h22v22h-22z" fill="#666"/></svg>
</footer>

<div class="dialog">
  <div class="title"><i class="red"></i><i></i><i></i><span>Edit Tooltip</span></div>
  <div class="dbody">
    <div class="fmt">
      <div class="combo cfont"><span>Tableau Book</span><i><svg width="18" height="12" viewBox="0 0 18 12"><path d="M2 2L9 9.500L16 2" fill="none" stroke="#fff" stroke-width="2.800"/></svg></i></div>
      <div class="combo csize"><span>10</span><i><svg width="18" height="12" viewBox="0 0 18 12"><path d="M2 2L9 9.500L16 2" fill="none" stroke="#fff" stroke-width="2.800"/></svg></i></div>
      <div class="fb act">B</div><div class="fb ital">I</div><div class="fb und"><u>U</u></div>
      <div class="fb color"><b></b><svg class="car"><use href="#caret"/></svg></div>
      <div class="align"><div class="act"><svg width="22" height="20" viewBox="0 0 22 20"><path d="M1 1H21M1 5.500H13M1 10H21M1 14.500H13M1 19H21" stroke="#3c4a60" stroke-width="1.800"/></svg></div><div><svg width="22" height="20" viewBox="0 0 22 20"><path d="M1 1H21M5 5.500H17M1 10H21M5 14.500H17M1 19H21" stroke="#3c4a60" stroke-width="1.800"/></svg></div><div><svg width="22" height="20" viewBox="0 0 22 20"><path d="M1 1H21M9 5.500H21M1 10H21M9 14.500H21M1 19H21" stroke="#3c4a60" stroke-width="1.800"/></svg></div></div>
      <div class="fb insert">Insert<svg class="car"><use href="#caret"/></svg></div>
      <div class="fb del"><svg width="28" height="28" viewBox="0 0 28 28"><path d="M1 2Q5-1 8 4L15 12L24 2L26 3L17 14L26 25L24 27L14 17Q9 22 6 27L2 26Q5 20 12 14Q7 6 1 5Z" fill="#b9502f"/></svg></div>
    </div>
    <div class="ruler">
      <svg width="1076" height="32" viewBox="0 0 1076 32"><path d="M8 14H1070" stroke="#333" stroke-width="5" stroke-dasharray="1.400 22.600"/><path d="M104 14H1070" stroke="#222" stroke-width="14" stroke-dasharray="1.600 190.400"/></svg>
      <span>1</span><span>2</span><span>3</span><span>4</span><span>5</span>
      <svg class="mark" width="22" height="26" viewBox="0 0 22 26"><defs><linearGradient id="mg" x2="0" y2="1"><stop offset=".2" stop-color="#f0f0f0"/><stop offset="1" stop-color="#b0b0b0"/></linearGradient></defs><path d="M1 25V10L10.500 1L20 10V25Z" fill="url(#mg)" stroke="#777" stroke-width="1.600"/></svg>
    </div>
    <div class="edit"><p><b>Common Tree Name:</b><span class="f1">&lt;ATTR(Common Name)&gt;</span></p><p><b class="k2">Tree Genus :</b><span class="f2">&lt;ATTR(Genus Name)&gt;</span></p></div>
    <div class="checks">
      <div><i><svg width="28" height="28" viewBox="0 0 28 28"><path d="M8 15L12 20.500L20.500 7" fill="none" stroke="#fff" stroke-width="3"/></svg></i><span>Show tooltips</span><div class="popup"><svg width="18" height="28" viewBox="0 0 18 28"><path d="M3 10L9 3L15 10M3 18L9 25L15 18" fill="none" stroke="#fff" stroke-width="2.600"/></svg></div></div>
      <div><i><svg width="28" height="28" viewBox="0 0 28 28"><path d="M8 15L12 20.500L20.500 7" fill="none" stroke="#fff" stroke-width="3"/></svg></i>Include comma</div>
      <div><i><svg width="28" height="28" viewBox="0 0 28 28"><path d="M8 15L12 20.500L20.500 7" fill="none" stroke="#fff" stroke-width="3"/></svg></i>Allow selection by category</div>
    </div>
    <div class="btns"><button class="reset">Reset</button><button class="prev">Preview</button><button class="cancel">Cancel</button><button class="ok">OK</button></div>
  </div>
  <div class="menu">
    <div><svg width="24" height="22" viewBox="0 0 24 22"><path d="M2 12L9 19L21 2" fill="none" stroke="#222" stroke-width="3.200"/></svg>Responsive - Show tooltips instantly</div>
    <div class="hl">On Hover - Show tooltips on hover</div>
  </div>
</div>
</body>
</html>
```
FILE: styles.css
```css
*{box-sizing:border-box}
body{margin:0;width:2594px;height:1572px;overflow:hidden;position:relative;display:flex;flex-direction:column;background:#f4f4f4;font-family:Roboto,"Noto Sans",sans-serif;font-size:25px;color:#333}
svg{display:block;flex:none}
.defs{position:absolute}
i{font-style:normal}
.car{width:12px;height:8px;color:#555}
.off{color:#bbb}

.toolbar{height:80px;flex:none;display:flex;align-items:center}
.sep{width:2px;height:70px;background:#d4d4d4;margin-top:2px;flex:none}
.logo{margin-left:23px}
.s1{margin-left:29px}
.back{margin-left:26px}
.fwd{margin-left:29px}
.save{margin-left:28px}
.dbadd{margin-left:33px}
.dbpause{margin-left:31px}
.c1{margin-left:20px;margin-top:2px}
.refresh{margin-left:15px}
.c2{margin-left:17px;margin-top:2px}
.s2{margin-left:19px}
.wsadd{margin-left:20px}
.c3{margin-left:15px;margin-top:2px}
.dup{margin-left:19px}
.clear{margin-left:21px}
.c4{margin-left:14px;margin-top:2px}
.s3{margin-left:19px}
.swap{margin-left:25px}
.sorta{margin-left:27px}
.sortd{margin-left:25px}
.s4{margin-left:26px}
.pen{margin-left:33px}
.c5{margin-left:15px;margin-top:2px}
.att{margin-left:22px}
.c6{margin-left:17px;margin-top:2px}
.tbox{width:34px;height:29px;margin-left:23px;border:2px dashed #aaa;font:22px/25px "Liberation Serif",serif;text-align:center;color:#555}
.on{background:#e6e6e6;height:60px;display:flex;align-items:center}
.pinbtn{width:60px;margin-left:17px;padding-left:13px}
.fit{width:195px;height:46px;margin-left:18px;border:2px solid #d4d4d4;border-radius:3px;display:flex;align-items:center;justify-content:flex-end;padding-right:11px}
.fit .car{color:#ccc}
.s5{margin-left:31px}
.cards{width:76px;margin-left:14px;padding-left:7px;gap:9px}
.cards .car{color:#222}
.pres{margin-left:16px}
.s6{margin-left:29px}
.share{margin-left:28px}
.showme{margin-left:620px;display:flex;align-items:center;gap:8px;color:#000;font-size:24.500px;white-space:nowrap}

.work{flex:1;min-height:0;display:flex;gap:12px}
.side{width:412px;border-right:2px solid #d4d4d4;border-top:2px solid #d4d4d4;background:#fff;overflow:hidden}
.tabs2{display:flex;height:55px;line-height:49px;color:#333}
.tabs2 b{width:149px;padding-left:28px;color:#222;font-size:25.500px}
.tabs2 span{flex:1;background:#fafafa;border-left:2px solid #d4d4d4;border-bottom:2px solid #d4d4d4;padding:0 14px 0 23px;display:flex;align-items:center;justify-content:space-between}
.sources{height:102px;padding:9px 0 0 14px;border-bottom:2px solid #e4e4e4}
.src{height:40px;width:374px;padding-left:21px;display:flex;align-items:center;gap:11px}
.sel{background:#e5e5e5}
.find{display:flex;align-items:center;margin:20px 0 0 8px;height:46px}
.search{width:264px;height:46px;border:2px solid #ccc;border-radius:4px;color:#9a9a9a;display:flex;align-items:center;justify-content:space-between;padding:1px 12px 0 16px}
.funnel{margin:0 8px 0 7px}
.find i{width:2px;height:34px;background:#d4d4d4;margin:0 11px 0 0}
.find .fcar{width:15px;height:9px;color:#555;margin-left:16px}
h3{margin:18px 0 0 28px;font-size:24px;line-height:31px;height:41px;color:#000}
.fields{list-style:none;margin:0;padding:0;color:#111;font-size:25px;letter-spacing:-.07px}
.fields li{height:42px;display:flex;align-items:center;white-space:nowrap}
.fields .wide{letter-spacing:.35px}
.fields svg{width:32px;height:24px;margin:2px 20px 0 34px;color:#3b83a6}
.fields em{font-style:normal;width:52px;margin-left:34px;font-size:19px;line-height:24px;padding-top:2px;color:#3b83a6}
.fields .g svg{color:#3fa67c}
.it{font-style:italic}
.measures{margin-top:-2px}
.measures:before{content:"";display:block;height:2px;margin:2px 12px 1px 22px;background:#ddd}

.shelves{width:308px;display:flex;flex-direction:column;gap:12px}
.card{border:2px solid #d4d4d4;background:#fafafa;padding:12px 0 0 12px;line-height:36px}
.pages{height:124px}
.filters{height:156px}
.marks{height:482px}
.auto{height:42px;margin:21px 12px 12px 0;border:2px solid #ccc;border-radius:4px;display:flex;align-items:center;font-size:22.500px}
.auto svg{margin:0 14px 0 24px}
.auto span{flex:1}
.auto i{width:38px;height:38px;border-left:2px solid #d4d4d4;display:flex;align-items:center}
.auto .car{margin:2px 0 0 12px}
.mbtns{display:grid;grid-template-columns:86px 84px 86px;gap:12px}
.mbtns div{height:84px;border:2px solid #d4d4d4;display:flex;flex-direction:column;align-items:center;padding-top:11px;font-size:21px;line-height:28px;color:#222;gap:8px;white-space:nowrap}
.bub{width:30px;height:28px}
.mbtns .bub{height:32px}
.attr{display:flex;align-items:center;height:40px;margin-top:6px;padding-left:14px;gap:6px}
.mbtns + .attr{margin-top:18px}
.attr .bub{margin-top:1px}
.attr span{width:228px;height:40px;border-radius:20px;background:#4996b2;color:#fff;padding-left:21px;line-height:39px;font-size:24.500px;white-space:nowrap}

.view{width:1848px;display:flex;flex-direction:column;gap:12px}
.shelf{height:56px;border:2px solid #d4d4d4;background:#fafafa;display:flex;align-items:center}
.shelf label{width:249px;height:52px;border-right:2px solid #d4d4d4;display:flex;align-items:center;gap:13px;padding-left:13px}
.shelf label svg{margin-top:-2px}
.shelf span{width:296px;height:40px;border-radius:20px;margin-left:5px;background:#00b180;color:#fff;line-height:39px;padding-left:20px}
.sheet{height:1246px;border:2px solid #d4d4d4;background:#fff;padding:22px 10px 0 10px}
h1{margin:0 0 11px 10px;font:300 41px/52px "Noto Sans",sans-serif;color:#333;letter-spacing:.2px}
.mapbox{position:relative;height:1146px;width:1824px;border:2px solid #e3e3e3;background:#efefef}
.map{width:1820px;height:1142px;overflow:hidden}
.water{fill:#c8d8d8}
.w2{fill:#c0d5cb}
.park{fill:#dde6d8}
.park2{fill:#d1e0c9}
.stream{fill:none;stroke:#c0d5cb;stroke-width:4;vector-effect:non-scaling-stroke}
.dots,.solid{fill:none;stroke:#59a14f;stroke-width:4.200;stroke-linecap:round;vector-effect:non-scaling-stroke}
.dots.a{stroke-dasharray:0 6 0 6 0 7 0 6 0 6 0 9}
.dots.b{stroke-dasharray:0 5.500 0 6 0 7.500}
.dots.c{stroke-dasharray:0 4.500 0 5 0 6}
.dots.v{stroke-dasharray:0 5 0 6 0 5 0 8}
.dots.d{stroke-dasharray:0 3.600}
.solid{stroke-width:9}
.solid.s{stroke-width:5}
.credit{position:absolute;left:5px;bottom:4px;width:260px;height:25px;background:rgba(255,255,255,.8);font:15.900px/25px "Liberation Sans",sans-serif;padding-left:6px;color:#555;white-space:nowrap}
.null{position:absolute;right:10px;bottom:10px;width:94px;height:28px;border-radius:5px;background:rgba(150,150,150,.85);color:#fff;font-weight:700;font-size:20px;line-height:28px;text-align:center;letter-spacing:.7px}

.sheets{height:62px;flex:none;border-top:2px solid #ccc;border-bottom:2px solid #ccc;background:#e6e6e6;display:flex;color:#555;font-size:24.500px;line-height:56px;white-space:nowrap}
.sheets>*{border-right:2px solid #c8c8c8;padding-left:12px;overflow:hidden;flex:none;letter-spacing:.1px}
.sheets b{background:#fafafa;letter-spacing:.7px}
.sheets .t-src{width:254px;display:flex;align-items:center;gap:11px;padding-left:11px}
.t114{width:114px}
.t115{width:115px}
.sheets .t117{width:117px;letter-spacing:.5px}
.t130{width:130px}
.sheets .t156{width:156px;letter-spacing:.4px}
.sheets .t399{width:399px;letter-spacing:-.08px}
.sheets .t400{width:400px;letter-spacing:-.08px}
.t-new{width:64px;padding-top:16px}
.sheets .t-new{padding-left:18px}
.sheets .last{border:0;width:56px;padding-left:18px}
.status{height:36px;flex:none;display:flex;align-items:center;background:linear-gradient(#ebebeb,#e4e4e4);color:#111;font-size:21px;white-space:nowrap}
.status span:first-child{width:170px;margin-left:17px;letter-spacing:.4px}
.status span:nth-child(2){width:1665px;letter-spacing:-.1px}
.status i{height:36px;border-left:2px solid #ccc;flex:none}
.g1{width:254px}
.g2{width:53px}
.g3{width:55px}
.g4{width:94px}
.g5{width:0}
.pager{width:142px;border-right:2px solid #ccc}

.dialog{position:absolute;left:698px;top:289px;width:1160px;height:881px;border-radius:11px;background:#ebebeb;box-shadow:0 0 0 1px rgba(0,0,0,.22),0 36px 80px 2px rgba(0,0,0,.48);font-family:"Noto Sans","Open Sans",sans-serif}
.title{height:45px;border-radius:11px 11px 0 0;background:linear-gradient(#e9e9e9,#d0d0d0);border-bottom:2px solid #ababab;display:flex;align-items:center;gap:16px;padding-left:16px}
.title i{width:24px;height:24px;border-radius:50%;background:#d2d2d2;border:1.500px solid #b3b3b3}
.title .red{background:#ec6a5e;border-color:#d5544a}
.title span{margin-left:376px;font-size:25.500px;color:#4b4b4b;letter-spacing:.15px;line-height:32px}
.dbody{padding:46px 40px 0 40px}
.fmt{display:flex;height:42px;margin-left:1px;color:#222}
.combo{height:40px;display:flex;border:2px solid #b9b9b9;border-right:0;background:#fff;color:#000;line-height:38px;border-radius:0 8px 8px 0}
.combo span{flex:1;padding-left:3px;font-family:Roboto,sans-serif;white-space:nowrap}
.combo i{width:35px;height:40px;margin-top:-2px;border-radius:0 8px 8px 0;background:linear-gradient(#76a4f5,#2469f6);display:flex;align-items:center;justify-content:center}
.cfont{width:292px}
.csize{width:142px;margin:0 13px 0 14px}
.csize span{font-family:"Noto Sans",sans-serif;font-size:27px;line-height:34px}
.fb{width:52px;height:42px;border:2px solid #9c9c9c;background:#dedede;margin-right:6px;text-align:center;font-weight:700;line-height:37px;color:#38465c;font-size:24px}
.fmt .act{background:#cbe4fe;border:2px solid #2e90fa}
.ital{font-family:"Liberation Serif",serif;font-style:italic;font-size:28px}
.und{font-weight:600}
.und u{text-underline-offset:5px}
.color{width:86px;margin:0 12px 0 6px;display:flex;align-items:center;padding-left:4px}
.color b{width:53px;height:29px;background:#333;border:2px solid #c4c4c4}
.fb .car{width:14px;height:9px;margin:1px 0 0 8px;color:#000}
.align{display:flex;width:150px;height:42px;border:2px solid #bdbdbd;background:#dedede;margin-right:12px}
.align div{width:50px;height:38px;display:flex;align-items:center;justify-content:center}
.align .act{height:42px;margin:-2px 0 0 -2px}
.insert{width:120px;display:flex;align-items:center;font-weight:400;color:#111;padding:0 0 3px 12px;font-size:25px;letter-spacing:.3px}
.insert .car{margin:4px 0 0 7px}
.del{display:flex;align-items:center;justify-content:center;margin:0}
.ruler{position:relative;width:1079px;height:34px;margin-top:15px;border:2px solid #bdbdbd;background:#fff;display:flex}
.ruler>svg:first-child{margin-right:-1076px}
.ruler span{width:192px;height:30px;flex:none;text-align:center;font-size:26px;line-height:32px;color:#222;background:linear-gradient(#fff,#fff) 50%/20px 30px no-repeat;transform:translateX(107px)}
.mark{position:absolute;left:-2px;top:12px}
.edit{width:1080px;height:384px;margin-top:15px;border:2px solid #a6a6a6;background:#fff;padding:8px 0 0 8px;font-size:25px;color:#333}
.edit p{margin:0;height:36px;line-height:35px;display:flex;white-space:nowrap}
.edit b{width:288px;color:#59a14f;font-weight:600;letter-spacing:-.4px}
.edit .k2{width:192px;letter-spacing:-.1px}
.edit span{background:#ebebeb;width:296px;font-weight:500;letter-spacing:.3px}
.edit .f2{width:267px;letter-spacing:.45px}
.checks{margin-top:17px;font-size:27px;color:#222}
.checks>div{height:52px;display:flex;align-items:center;line-height:40px}
.checks i{width:28px;height:28px;border-radius:6px;background:#4b8bf5;margin-right:8px}
.checks span{width:180px;letter-spacing:-.1px}
.popup{width:54px;height:40px;border-radius:0 8px 8px 0;background:linear-gradient(#5a93f5,#1c58d8);margin-left:539px;display:flex;align-items:center;justify-content:flex-end;padding-right:7px}
.btns{display:flex;margin:30px 1px 0 2px}
button{font:26px/38px "Noto Sans",sans-serif;height:40px;padding:0;border:0;border-radius:8px;background:#fff;box-shadow:0 0 0 1px #ccc,0 2px 2px rgba(0,0,0,.2);color:#222;letter-spacing:.1px}
.reset{width:136px}
.prev{width:153px;margin-left:8px}
.cancel{width:138px;margin-left:auto}
.ok{width:138px;margin-left:30px;background:linear-gradient(#6fa5f8,#1f66f7);box-shadow:0 1px 2px rgba(0,0,0,.3);color:#fff}
.menu{position:absolute;left:264px;top:603px;width:556px;height:88px;border-radius:10px;background:#ececec;box-shadow:0 0 0 1px rgba(0,0,0,.2),0 12px 28px rgba(0,0,0,.3);padding-top:8px;font:25.500px/36px Inter,sans-serif;color:#222;white-space:nowrap;letter-spacing:.1px}
.menu div{height:36px;display:flex;align-items:center;padding-left:5px;gap:7px}
.menu .hl{padding-left:36px;background:#4177f3;color:#fff}
```
